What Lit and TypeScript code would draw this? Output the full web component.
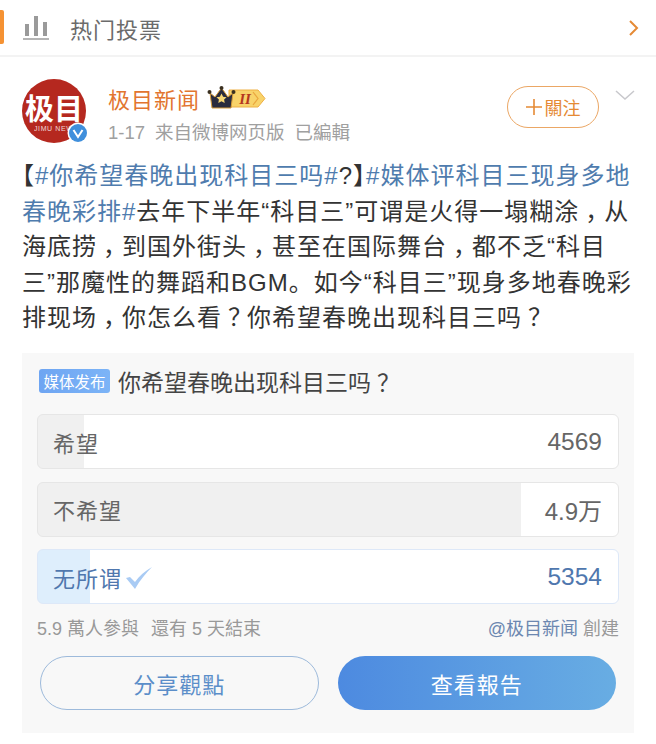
import { LitElement, html, css, TemplateResult } from "lit";
import { customElement } from "lit/decorators.js";

interface PollOption {
  label: string;
  count: string;
  fill: number;
  voted?: boolean;
}

const OPTIONS: PollOption[] = [
  { label: "希望", count: "4569", fill: 46 },
  { label: "不希望", count: "4.9万", fill: 483 },
  { label: "无所谓", count: "5354", fill: 52, voted: true },
];

@customElement("app-root")
export class AppRoot extends LitElement {
  static styles = css`
    :host {
      display: block;
      width: 656px;
      height: 744px;
      overflow: hidden;
      background: #fff;
      font-family: "Liberation Sans", "Noto Sans CJK SC", sans-serif;
      color: #333;
    }

    .topbar {
      display: flex;
      align-items: center;
      height: 55px;
      border-bottom: 2px solid #f3f3f3;
    }
    .mark {
      width: 4px;
      height: 34px;
      margin-top: -1px;
      background: #f59233;
      border-radius: 0 2px 2px 0;
    }
    .bars {
      margin-left: 19px;
      margin-top: -2px;
    }
    .topbar-title {
      margin-left: 21px;
      font-size: 22px;
      letter-spacing: 1px;
      color: #6b6b6b;
    }
    .more {
      margin-left: auto;
      margin-right: 17px;
    }

    .author {
      display: flex;
      padding: 22px 21px 0 22px;
      height: 64px;
    }
    .avatar {
      position: relative;
      flex: none;
      width: 64px;
      height: 64px;
      border-radius: 50%;
      background: #b5281f;
      color: #fff;
      text-align: center;
    }
    .avatar-name {
      display: block;
      padding-top: 11px;
      font-family: "Noto Sans CJK SC", serif;
      font-size: 29px;
      font-weight: 700;
      line-height: 34px;
      white-space: nowrap;
    }
    .avatar-sub {
      display: block;
      padding-left: 12px;
      font-size: 7px;
      line-height: 9px;
      letter-spacing: 0.6px;
      text-align: left;
      opacity: 0.8;
      white-space: nowrap;
    }
    .badge-v {
      position: absolute;
      right: -3px;
      bottom: -1px;
      display: block;
    }
    .author-info {
      margin-left: 22px;
      flex: 1;
    }
    .name-row {
      display: flex;
      align-items: center;
      height: 42px;
      margin-top: -2px;
    }
    .name {
      font-size: 22px;
      letter-spacing: 1px;
      color: #e2752f;
    }
    .rank {
      margin-left: 7px;
    }
    .meta {
      display: flex;
      gap: 10px;
      margin-top: 3px;
      font-size: 18.5px;
      line-height: 22px;
      color: #a0a0a0;
    }
    .follow {
      flex: none;
      display: flex;
      align-items: center;
      justify-content: center;
      gap: 3px;
      box-sizing: border-box;
      width: 92px;
      height: 42px;
      margin-top: 7px;
      border: 1px solid #eba765;
      border-radius: 21px;
      font-size: 18px;
      color: #e58a35;
    }
    .caret {
      flex: none;
      margin-left: 16px;
      margin-top: 11px;
    }

    .body {
      margin: 0;
      padding: 15px 20px 0 22px;
      height: 195px;
      font-size: 24px;
      letter-spacing: 1px;
      line-height: 35.5px;
      white-space: nowrap;
      color: #333;
    }
    .tag {
      color: #4f7cae;
    }
    /* half-width brackets and centred punctuation, as on iOS */
    .half {
      font-feature-settings: "halt";
    }
    .mid {
      font-feature-settings: "halt";
      padding: 0 6px;
    }

    .poll {
      margin: 0 22px;
      padding: 16px 15px 0;
      height: 364px;
      background: #f8f8f8;
    }
    .poll-head {
      display: flex;
      align-items: center;
      height: 24px;
      gap: 8px;
      padding-left: 2px;
    }
    .pill {
      flex: none;
      display: flex;
      align-items: center;
      justify-content: center;
      width: 71px;
      height: 24px;
      border-radius: 3px;
      background: linear-gradient(90deg, #6ea5f2, #7cb4f7);
      color: #fff;
      font-size: 15.5px;
    }
    .poll-title {
      font-size: 23px;
      color: #444;
      white-space: nowrap;
    }
    .options {
      display: flex;
      flex-direction: column;
      gap: 12.5px;
      margin-top: 21px;
    }
    .option {
      display: flex;
      align-items: center;
      box-sizing: border-box;
      height: 55px;
      padding: 0 16px 0 15px;
      border: 1.5px solid #e6e6e6;
      border-radius: 6px;
      background: linear-gradient(
        90deg,
        #f0f0f0 var(--fill),
        #fff var(--fill)
      );
      font-size: 22px;
      color: #666;
    }
    .option.voted {
      border-color: #dde8f8;
      background: linear-gradient(
        90deg,
        #deeefc var(--fill),
        #fff var(--fill)
      );
      color: #4f77ae;
    }
    .option .label {
      letter-spacing: 1px;
    }
    .option .check {
      margin-left: 3px;
      margin-top: 2px;
    }
    .option .count {
      margin-left: auto;
      font-size: 24.5px;
    }
    .option .count.wan {
      font-size: 24px;
    }
    .poll-foot {
      display: flex;
      justify-content: space-between;
      margin-top: 14px;
      font-size: 18px;
      line-height: 22px;
      color: #999;
    }
    .poll-foot .left {
      display: flex;
      gap: 12px;
    }
    .poll-foot .at {
      color: #6c87b0;
    }
    .actions {
      display: flex;
      gap: 19px;
      margin: 16px 3px 0;
    }
    .btn {
      display: flex;
      align-items: center;
      justify-content: center;
      box-sizing: border-box;
      width: 279px;
      height: 54px;
      border-radius: 27px;
      font-size: 22px;
      letter-spacing: 1px;
    }
    .btn.outline {
      border: 1.5px solid #9dbadb;
      color: #5b8ec9;
    }
    .btn.solid {
      background: linear-gradient(90deg, #4d8ae0, #68ade3);
      color: #fff;
    }
  `;

  private renderBarsIcon(): TemplateResult {
    return html`<svg class="bars" width="26" height="26" viewBox="0 0 26 26">
      <rect x="2" y="10" width="4" height="12" fill="#9a9a9a" />
      <rect x="11" y="2" width="4" height="20" fill="#9a9a9a" />
      <rect x="20" y="8" width="4" height="14" fill="#9a9a9a" />
      <rect x="0" y="24" width="26" height="2" fill="#b5b5b5" />
    </svg>`;
  }

  private renderRank(): TemplateResult {
    return html`<svg class="rank" width="60" height="24" viewBox="0 0 60 24">
      <path
        d="M22 4h29l7 8.5-7 8.5H22z"
        fill="#f8d36a"
        stroke="#eeb045"
        stroke-width="1"
      />
      <path d="M46 6l5 6.5-5 6.5" fill="none" stroke="#eaa63e" stroke-width="1.2" />
      <path
        d="M3 7l5 4 5-7 1.5-1 1.5 1 5 7 5-4-2 15H5z"
        fill="#2a2c3e"
        stroke="#d79c3a"
        stroke-width="1"
      />
      <circle cx="2.5" cy="6" r="2" fill="#3a3020" />
      <circle cx="14.5" cy="2" r="2" fill="#3a3020" />
      <circle cx="26.5" cy="6" r="2" fill="#3a3020" />
      <path
        d="M14.5 7.5l1.6 3.2 3.5.5-2.5 2.4.6 3.4-3.2-1.7-3.2 1.7.6-3.4-2.5-2.4 3.5-.5z"
        fill="#f7d774"
      />
      <text
        x="38"
        y="17.5"
        text-anchor="middle"
        font-family="Liberation Serif, serif"
        font-size="15"
        font-weight="700"
        font-style="italic"
        fill="#b5371f"
      >II</text>
    </svg>`;
  }

  private renderOption(option: PollOption): TemplateResult {
    return html`<div
      class="option ${option.voted ? "voted" : ""}"
      style="--fill: ${option.fill}px"
    >
      <span class="label">${option.label}</span>
      ${option.voted
        ? html`<svg class="check" width="28" height="22" viewBox="0 0 28 22">
            <path
              d="M1 11l4-1 5 5C14 9 20 4 27 0 21 6 15 13 10 22z"
              fill="#a9cbf4"
            />
          </svg>`
        : ""}
      <span class="count ${option.count.endsWith("万") ? "wan" : ""}"
        >${option.count}</span
      >
    </div>`;
  }

  render(): TemplateResult {
    return html`
      <div class="topbar">
        <div class="mark"></div>
        ${this.renderBarsIcon()}
        <span class="topbar-title">热门投票</span>
        <svg class="more" width="11" height="16" viewBox="0 0 11 16">
          <path d="M2 1l7 7-7 7" fill="none" stroke="#e58a35" stroke-width="2" />
        </svg>
      </div>

      <div class="author">
        <div class="avatar">
          <span class="avatar-name">极目</span>
          <span class="avatar-sub">JIMU NEWS</span>
          <svg class="badge-v" width="22" height="22" viewBox="0 0 22 22">
            <circle cx="11" cy="11" r="10.5" fill="#fff" />
            <circle cx="11" cy="11" r="9" fill="#3f8fdc" />
            <path
              d="M6.5 8l4.5 7 4.5-7"
              fill="none"
              stroke="#fff"
              stroke-width="2"
            />
          </svg>
        </div>
        <div class="author-info">
          <div class="name-row">
            <span class="name">极目新闻</span>
            ${this.renderRank()}
          </div>
          <div class="meta">
            <span>1-17</span><span>来自微博网页版</span><span>已編輯</span>
          </div>
        </div>
        <div class="follow">
          <svg width="16" height="16" viewBox="0 0 16 16">
            <path d="M0 8h16M8 0v16" stroke="#e58a35" stroke-width="1.6" />
          </svg>
          <span>關注</span>
        </div>
        <svg class="caret" width="20" height="10" viewBox="0 0 20 10">
          <path d="M1 1l9 8 9-8" fill="none" stroke="#c8c8cc" stroke-width="1.5" />
        </svg>
      </div>

      <p class="body"><span class="half">【</span><span class="tag">#你希望春晚出现科目三吗#</span>?<span class="half">】</span><span class="tag">#媒体评科目三现身多地</span><br /><span class="tag">春晚彩排#</span>去年下半年“科目三”可谓是火得一塌糊涂<span class="mid">，</span>从<br />海底捞<span class="mid">，</span>到国外街头<span class="mid">，</span>甚至在国际舞台<span class="mid">，</span>都不乏“科目<br />三”那魔性的舞蹈和BGM。如今“科目三”现身多地春晚彩<br />排现场<span class="mid">，</span>你怎么看<span class="mid">？</span>你希望春晚出现科目三吗<span class="mid">？</span></p>

      <div class="poll">
        <div class="poll-head">
          <span class="pill">媒体发布</span>
          <span class="poll-title">你希望春晚出现科目三吗<span class="mid">？</span></span>
        </div>
        <div class="options">${OPTIONS.map((o) => this.renderOption(o))}</div>
        <div class="poll-foot">
          <div class="left"><span>5.9 萬人參與</span><span>還有 5 天結束</span></div>
          <div><span class="at">@极目新闻</span> 創建</div>
        </div>
        <div class="actions">
          <div class="btn outline">分享觀點</div>
          <div class="btn solid">查看報告</div>
        </div>
      </div>
    `;
  }
}
